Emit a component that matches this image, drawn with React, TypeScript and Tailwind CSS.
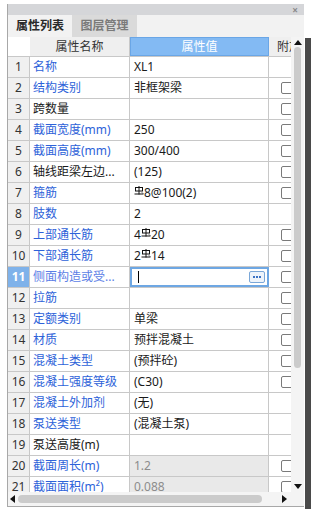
import type { ReactNode } from 'react';

// HRB400 rebar grade mark, drawn small and raised like the reference
function Grade3() {
  return (
    <svg width="10" height="9" viewBox="0 0 10 9" className="relative -top-[3px] inline-block shrink-0">
      <rect x="1.5" y="1.5" width="7" height="3.5" fill="none" stroke="#111" strokeWidth="1" />
      <path d="M5 0 V8.5 M0.5 8 H9.5 M8 6.5 L9 7.5" stroke="#111" strokeWidth="1" fill="none" />
    </svg>
  );
}

interface Row {
  name: string;
  value?: ReactNode;
  blue: boolean;
  check: boolean;
  locked?: boolean;
}

const ROWS: Row[] = [
  { name: '名称', value: 'XL1', blue: true, check: false },
  { name: '结构类别', value: '非框架梁', blue: true, check: true },
  { name: '跨数量', blue: false, check: true },
  { name: '截面宽度(mm)', value: '250', blue: true, check: true },
  { name: '截面高度(mm)', value: '300/400', blue: true, check: true },
  { name: '轴线距梁左边...', value: '(125)', blue: false, check: true },
  { name: '箍筋', value: <><Grade3 /><span>8@100(2)</span></>, blue: true, check: true },
  { name: '肢数', value: '2', blue: true, check: false },
  { name: '上部通长筋', value: <><span>4</span><Grade3 /><span>20</span></>, blue: true, check: true },
  { name: '下部通长筋', value: <><span>2</span><Grade3 /><span>14</span></>, blue: true, check: true },
  { name: '侧面构造或受...', blue: true, check: true },
  { name: '拉筋', blue: true, check: true },
  { name: '定额类别', value: '单梁', blue: true, check: true },
  { name: '材质', value: '预拌混凝土', blue: true, check: true },
  { name: '混凝土类型', value: '(预拌砼)', blue: true, check: true },
  { name: '混凝土强度等级', value: '(C30)', blue: true, check: true },
  { name: '混凝土外加剂', value: '(无)', blue: true, check: false },
  { name: '泵送类型', value: '(混凝土泵)', blue: true, check: false },
  { name: '泵送高度(m)', blue: false, check: false },
  { name: '截面周长(m)', value: '1.2', blue: true, check: true, locked: true },
  { name: '截面面积(m²)', value: '0.088', blue: true, check: true, locked: true },
];

const SELECTED = 10;

export default function App() {
  return (
    <div className="flex h-[509px] w-[311px] overflow-hidden bg-white pt-[4px] font-['Noto_Sans','Noto_Sans_CJK_SC',sans-serif] text-[12px] text-[#1a1a1a]">
      <div className="w-[7px] shrink-0" />

      <div className="flex h-[503px] w-[297px] shrink-0 flex-col border-b border-l border-[#a8a8a8]">
        {/* title bar */}
        <div className="flex h-[11px] shrink-0 items-center justify-end bg-[#d5d6d9] pr-[6px]">
          <span className="text-[10px] font-bold leading-none text-[#8a8a8a]">×</span>
        </div>

        {/* tabs */}
        <div className="flex h-[22px] shrink-0 bg-[#f2f2f2]">
          <div className="flex w-[64px] items-center justify-center font-semibold text-[#2a2a2a]">属性列表</div>
          <div className="flex w-[65px] items-center justify-center bg-[#dadada] font-semibold text-[#7a7a7a]">图层管理</div>
        </div>

        {/* grid + vertical scrollbar */}
        <div className="flex h-[455px] shrink-0">
          <div className="w-[283px] shrink-0 overflow-hidden">
            <div className="flex h-[20px] border-b border-[#c8c8c8]">
              <div className="w-[22px] shrink-0 bg-white" />
              <div className="flex w-[100px] shrink-0 items-center justify-center border-r border-[#c8c8c8] bg-[#efefef] text-[#333]">属性名称</div>
              <div className="flex w-[139px] shrink-0 items-center justify-center border border-[#6aa6e6] bg-[#83baf3] text-white">属性值</div>
              <div className="w-[22px] shrink-0 overflow-hidden whitespace-nowrap bg-[#efefef] pl-[8px] leading-[20px] text-[#333]">附加</div>
            </div>

            {ROWS.map((r, i) => {
              const sel = i === SELECTED;
              return (
                <div key={i} className="flex h-[21px] border-b border-[#c8c8c8]">
                  <div
                    className={
                      sel
                        ? 'flex w-[22px] shrink-0 items-center justify-center border-r border-[#c8c8c8] bg-[#7fb2ea] font-bold text-white'
                        : 'flex w-[22px] shrink-0 items-center justify-center border-r border-[#c8c8c8] bg-[#f0f0f0] text-[#333]'
                    }
                  >
                    {i + 1}
                  </div>
                  <div
                    className={
                      'flex w-[100px] shrink-0 items-center overflow-hidden whitespace-nowrap border-r border-[#c8c8c8] pl-[3px] ' +
                      (sel ? 'text-[#5c7ee6]' : r.blue ? 'text-[#2d62d9]' : 'text-[#1a1a1a]')
                    }
                  >
                    {r.name}
                  </div>
                  {sel ? (
                    <div className="relative flex w-[139px] shrink-0 items-center border-2 border-[#6ea7e3] bg-white pl-[6px]">
                      <div className="h-[12px] w-px bg-black" />
                      <div className="absolute right-[2px] top-[2px] flex h-[12px] w-[16px] items-center justify-center gap-[1px] rounded-[2px] border border-[#7aa7d8] bg-[#eef4fb]">
                        <span className="h-[2px] w-[2px] bg-[#3b72c4]" />
                        <span className="h-[2px] w-[2px] bg-[#3b72c4]" />
                        <span className="h-[2px] w-[2px] bg-[#3b72c4]" />
                      </div>
                    </div>
                  ) : (
                    <div
                      className={
                        'flex w-[139px] shrink-0 items-center whitespace-nowrap border-r border-[#c8c8c8] pl-[4px] ' +
                        (r.locked ? 'bg-[#e9e9e9] text-[#8c8c8c]' : 'bg-white')
                      }
                    >
                      {r.value}
                    </div>
                  )}
                  <div className="flex w-[22px] shrink-0 items-center overflow-hidden pl-[12px]">
                    {r.check && <div className="h-[12px] w-[12px] shrink-0 rounded-[2px] border border-[#7a7a7a] bg-white" />}
                  </div>
                </div>
              );
            })}
          </div>

          {/* vertical scrollbar */}
          <div className="flex w-[13px] shrink-0 flex-col items-center bg-[#f4f4f4] pt-[3px]">
            <svg width="8" height="5" viewBox="0 0 8 5"><path d="M0 5 L4 0 L8 5 Z" fill="#111" /></svg>
            <div className="mt-[2px] h-[321px] w-[7px] rounded-full bg-[#cbcbcb]" />
            <div className="flex-1" />
            <svg width="8" height="5" viewBox="0 0 8 5" className="mb-[3px]"><path d="M0 0 L8 0 L4 5 Z" fill="#111" /></svg>
          </div>
        </div>

        {/* horizontal scrollbar */}
        <div className="flex h-[14px] shrink-0 items-center bg-[#f4f4f4]">
          <div className="flex w-[283px] shrink-0 items-center">
            <svg width="5" height="8" viewBox="0 0 5 8" className="ml-[2px]"><path d="M5 0 L0 4 L5 8 Z" fill="#111" /></svg>
            <div className="ml-[3px] h-[8px] w-[244px] rounded-full bg-[#cbcbcb]" />
            <div className="flex-1" />
            <svg width="5" height="8" viewBox="0 0 5 8" className="mr-[4px]"><path d="M0 0 L5 4 L0 8 Z" fill="#111" /></svg>
          </div>
          <div className="w-[13px] shrink-0" />
        </div>
      </div>

      <div className="w-[1px] shrink-0" />
      <div className="mt-[34px] w-[6px] shrink-0 bg-[#4a4a4a]" />
    </div>
  );
}
